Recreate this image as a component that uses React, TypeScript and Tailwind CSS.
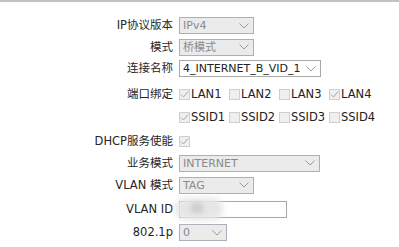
import React from "react";

const font = { fontFamily: '"DejaVu Sans", "Noto Sans CJK SC", sans-serif' };

function Chevron() {
  return (
    <svg width="10" height="6" viewBox="0 0 10 6" className="shrink-0">
      <path d="M0.5 0.5 L5 5 L9.5 0.5" fill="none" stroke="#9a9a9a" strokeWidth="1" />
    </svg>
  );
}

function Select({ value, w, enabled }: { value: string; w: string; enabled?: boolean }) {
  return (
    <div
      className={`${w} h-[17px] flex items-center justify-between pl-[3px] pr-[4px] border ${
        enabled ? "bg-white border-[#a8a8a8] text-[#222]" : "bg-[#ebebeb] border-[#a9b0b8] text-[#8a8a8a]"
      } text-[11px]`}
    >
      <span className="whitespace-nowrap leading-[15px]">{value}</span>
      <Chevron />
    </div>
  );
}

function Check({ checked }: { checked?: boolean }) {
  return (
    <div className="w-[11px] h-[11px] border border-[#cfcfcf] bg-[#efefef] flex items-center justify-center shrink-0">
      {checked && (
        <svg width="9" height="9" viewBox="0 0 9 9">
          <path d="M1 4.5 L3.5 7 L8 1.5" fill="none" stroke="#a8a8a8" strokeWidth="1" />
        </svg>
      )}
    </div>
  );
}

function Box({ label, checked }: { label: string; checked?: boolean }) {
  return (
    <div className="w-[50px] flex items-center gap-[1px] text-[11.5px] text-[#222] leading-[15px] whitespace-nowrap">
      <Check checked={checked} />
      <span>{label}</span>
    </div>
  );
}

function Row({ label, h, children }: { label: string; h: string; children?: React.ReactNode }) {
  return (
    <div className={`flex items-center ${h}`}>
      <div className="w-[173px] text-right text-[11.5px] text-[#262626] leading-[15px] whitespace-nowrap">{label}</div>
      <div className="ml-[6px] flex items-center">{children}</div>
    </div>
  );
}

export default function App() {
  return (
    <div className="w-[399px] h-[247px] bg-white overflow-hidden" style={font}>
      <div className="h-[2px] bg-[#c2c2c2]" />
      <div className="pt-[13px] flex flex-col">
        <Row label="IP协议版本" h="h-[21px]">
          <Select value="IPv4" w="w-[75px]" />
        </Row>
        <Row label="模式" h="h-[22px]">
          <Select value="桥模式" w="w-[75px]" />
        </Row>
        <Row label="连接名称" h="h-[21px]">
          <Select value="4_INTERNET_B_VID_1" w="w-[142px]" enabled />
        </Row>
        <div className="h-[2px]" />
        <Row label="端口绑定" h="h-[26px]">
          <Box label="LAN1" checked />
          <Box label="LAN2" />
          <Box label="LAN3" />
          <Box label="LAN4" checked />
        </Row>
        <Row label="" h="h-[20px]">
          <Box label="SSID1" checked />
          <Box label="SSID2" />
          <Box label="SSID3" />
          <Box label="SSID4" />
        </Row>
        <Row label="DHCP服务使能" h="h-[28px]">
          <Check checked />
        </Row>
        <Row label="业务模式" h="h-[16px]">
          <Select value="INTERNET" w="w-[141px]" />
        </Row>
        <Row label="VLAN 模式" h="h-[28px]">
          <Select value="TAG" w="w-[75px]" />
        </Row>
        <Row label="VLAN ID" h="h-[20px]">
          <div className="relative">
            <div className="w-[108px] h-[17px] bg-white border border-[#a8a8a8]" />
            <div className="absolute left-[-4px] top-[-3px] w-[48px] h-[22px] rounded-full bg-[#e6e6e6] blur-[3px]" />
            <div className="absolute left-[12px] top-[2px] w-[12px] h-[10px] bg-[#cfcfcf] blur-[2px]" />
          </div>
        </Row>
        <Row label="802.1p" h="h-[27px]">
          <Select value="0" w="w-[48px]" />
        </Row>
      </div>
    </div>
  );
}
